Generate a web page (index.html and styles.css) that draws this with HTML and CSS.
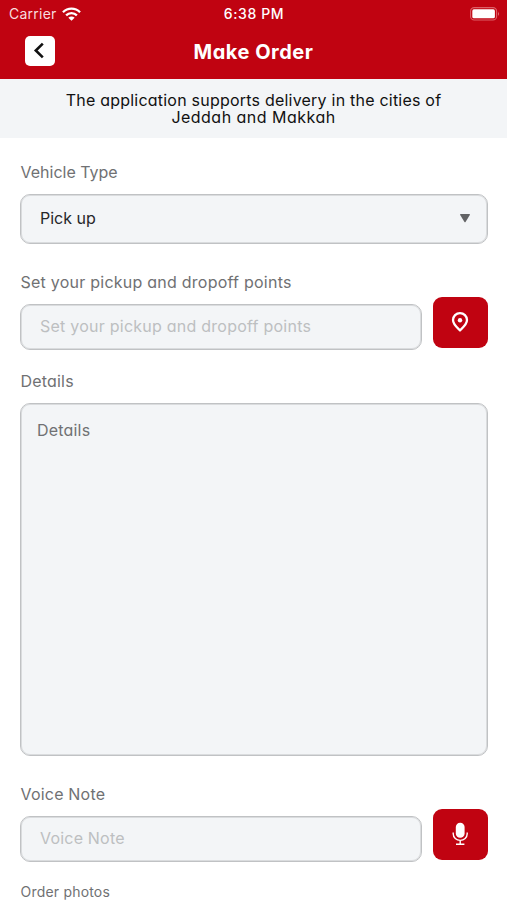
FILE: index.html
```html
<!DOCTYPE html>
<html lang="en">
<head>
<meta charset="utf-8">
<meta name="viewport" content="width=device-width, initial-scale=1">
<title>Make Order</title>
<link rel="stylesheet" href="styles.css">
</head>
<body>
<header class="header">
  <div class="status">
    <div class="carrier"><span class="carrier-name">Carrier</span>
      <svg class="wifi" viewBox="0 0 18 13" width="19" height="14"><g fill="none" stroke="#fff" stroke-width="2.2"><path d="M.9 4.8a11.5 11.5 0 0 1 16.2 0"/><path d="M3.9 7.8a7.2 7.2 0 0 1 10.2 0"/></g><path fill="#fff" d="M6 10a4.3 4.3 0 0 1 6 0l-3 3z"/></svg>
    </div>
    <span class="time">6:38 PM</span>
    <svg class="battery" viewBox="0 0 30 14" width="30" height="14"><rect x=".6" y=".6" width="26" height="12.4" rx="3.6" fill="none" stroke="#dc6068" stroke-width="1.1"/><rect x="2.3" y="2.3" width="22.6" height="9" rx="1.6" fill="#fff"/><path d="M28 4.6q1.7 2.2 0 4.4z" fill="#e5858b"/></svg>
  </div>
  <div class="navbar">
    <button class="back" type="button" aria-label="Back"><svg viewBox="0 0 30 30" width="30" height="30"><path d="M17.8 7.6 10.8 14.5l7 6.9" fill="none" stroke="#111" stroke-width="2.6"/></svg></button>
    <h1 class="title">Make Order</h1>
  </div>
</header>
<p class="notice"><span class="notice-first">The application supports delivery in the cities of</span><br><span class="notice-second">Jeddah and Makkah</span></p>
<main class="form">
  <div class="label vehicle-label">Vehicle Type</div>
  <div class="box select"><span class="pick">Pick up</span>
    <svg viewBox="0 0 12 10" width="12" height="10"><path d="M1.7 1h8.6q1 0 .5.9L6.7 8.7q-.7 1-1.4 0L1.2 1.9Q.7 1 1.7 1z" fill="#626365"/></svg>
  </div>
  <div class="row points">
    <div class="field">
      <div class="label points-label">Set your pickup and dropoff points</div>
      <div class="box input"><span class="points-label">Set your pickup and dropoff points</span></div>
    </div>
    <button class="action" type="button" aria-label="Choose location"><svg viewBox="0 0 20 22" width="20" height="22"><path d="M10 2.1a7 7 0 0 0-7 7c0 4.5 4.3 7.7 7 10.2 2.7-2.5 7-5.7 7-10.2a7 7 0 0 0-7-7z" fill="none" stroke="#fff" stroke-width="2.3"/><circle cx="10" cy="9.3" r="2.2" fill="#fff"/></svg></button>
  </div>
  <div class="label details-label">Details</div>
  <div class="box textarea">Details</div>
  <div class="row voice">
    <div class="field">
      <div class="label voice-label">Voice Note</div>
      <div class="box input"><span class="voice-label">Voice Note</span></div>
    </div>
    <button class="action" type="button" aria-label="Record"><svg viewBox="0 0 16 24" width="16" height="24"><rect x="3.8" y=".8" width="8.8" height="15" rx="4.3" fill="#fff"/><path d="M1.2 10.5v1.3a7 6.6 0 0 0 14 0v-1.3M8.2 18.4v3.6M4 22.3h8.4" fill="none" stroke="#fff" stroke-width="1.4"/></svg></button>
  </div>
  <div class="label photos-label">Order photos</div>
</main>
</body>
</html>
```
FILE: styles.css
```css
* { box-sizing: border-box; }
body {
  margin: 0;
  height: 900px;
  overflow: hidden;
  background: #fff;
  color: #111;
  font-family: Inter, "Liberation Sans", sans-serif;
  font-size: 16px;
  font-feature-settings: "cv11" 1;
}
button { border: 0; padding: 0; }
svg { display: block; }
.header { height: 79px; background: #c00311; color: #fff; }
.status {
  display: grid;
  grid-template-columns: 1fr auto 1fr;
  align-items: center;
  height: 27px;
  padding: 0 7px 0 9px;
  font-size: 14px;
  font-feature-settings: normal;
}
.carrier { display: flex; align-items: center; gap: 5px; color: #f8dddf; letter-spacing: .25px; }
.time { font-weight: 500; letter-spacing: .6px; margin-right: 1px; }
.battery { justify-self: end; }
.navbar {
  display: grid;
  grid-template-columns: 30px 1fr 30px;
  align-items: center;
  height: 48px;
  padding: 0 25px;
}
.back { width: 30px; height: 30px; border-radius: 5px; background: #fff; }
.title { margin: 2px 0 0; font-size: 20px; line-height: 24px; font-weight: 700; letter-spacing: .5px; text-align: center; }
.notice {
  height: 59px;
  margin: 0;
  padding-top: 13px;
  background: #f3f5f7;
  line-height: 17px;
  text-align: center;
}
.notice-first { letter-spacing: .22px; }
.notice-second { letter-spacing: .48px; }
.form { padding: 24px 19px 0 20px; }
.label { height: 20px; line-height: 20px; color: #707173; padding-left: .5px; white-space: nowrap; }
.points-label { letter-spacing: .24px; }
.voice-label, .details-label, .textarea { letter-spacing: .2px; }
.box {
  border: 1px solid #c0c2c4;
  border-radius: 10px;
  background: #f3f5f7;
  box-shadow: inset 0 0 0 1px #dadcde;
}
.select {
  display: flex;
  align-items: center;
  justify-content: space-between;
  height: 50px;
  margin-top: 12px;
  padding: 0 16px 2px 19px;
  color: #262729;
}
.row { display: flex; gap: 11px; }
.field { flex: 1; }
.input {
  display: flex;
  align-items: center;
  height: 46px;
  margin-top: 12px;
  padding: 0 19px 3px;
  color: #bdbfc1;
}
.points { margin-top: 28px; }
.action {
  display: flex;
  align-items: center;
  justify-content: center;
  width: 55px;
  height: 51px;
  margin-top: 25px;
  padding: 0 2px 2px 0;
  border-radius: 9px;
  background: #c00311;
}
.details-label { margin-top: 21px; }
.textarea { height: 353px; margin-top: 12px; padding: 16px; line-height: 20px; color: #707173; }
.voice { margin-top: 28px; }
.photos-label { margin-top: 20px; font-size: 14px; letter-spacing: .2px; }
```
